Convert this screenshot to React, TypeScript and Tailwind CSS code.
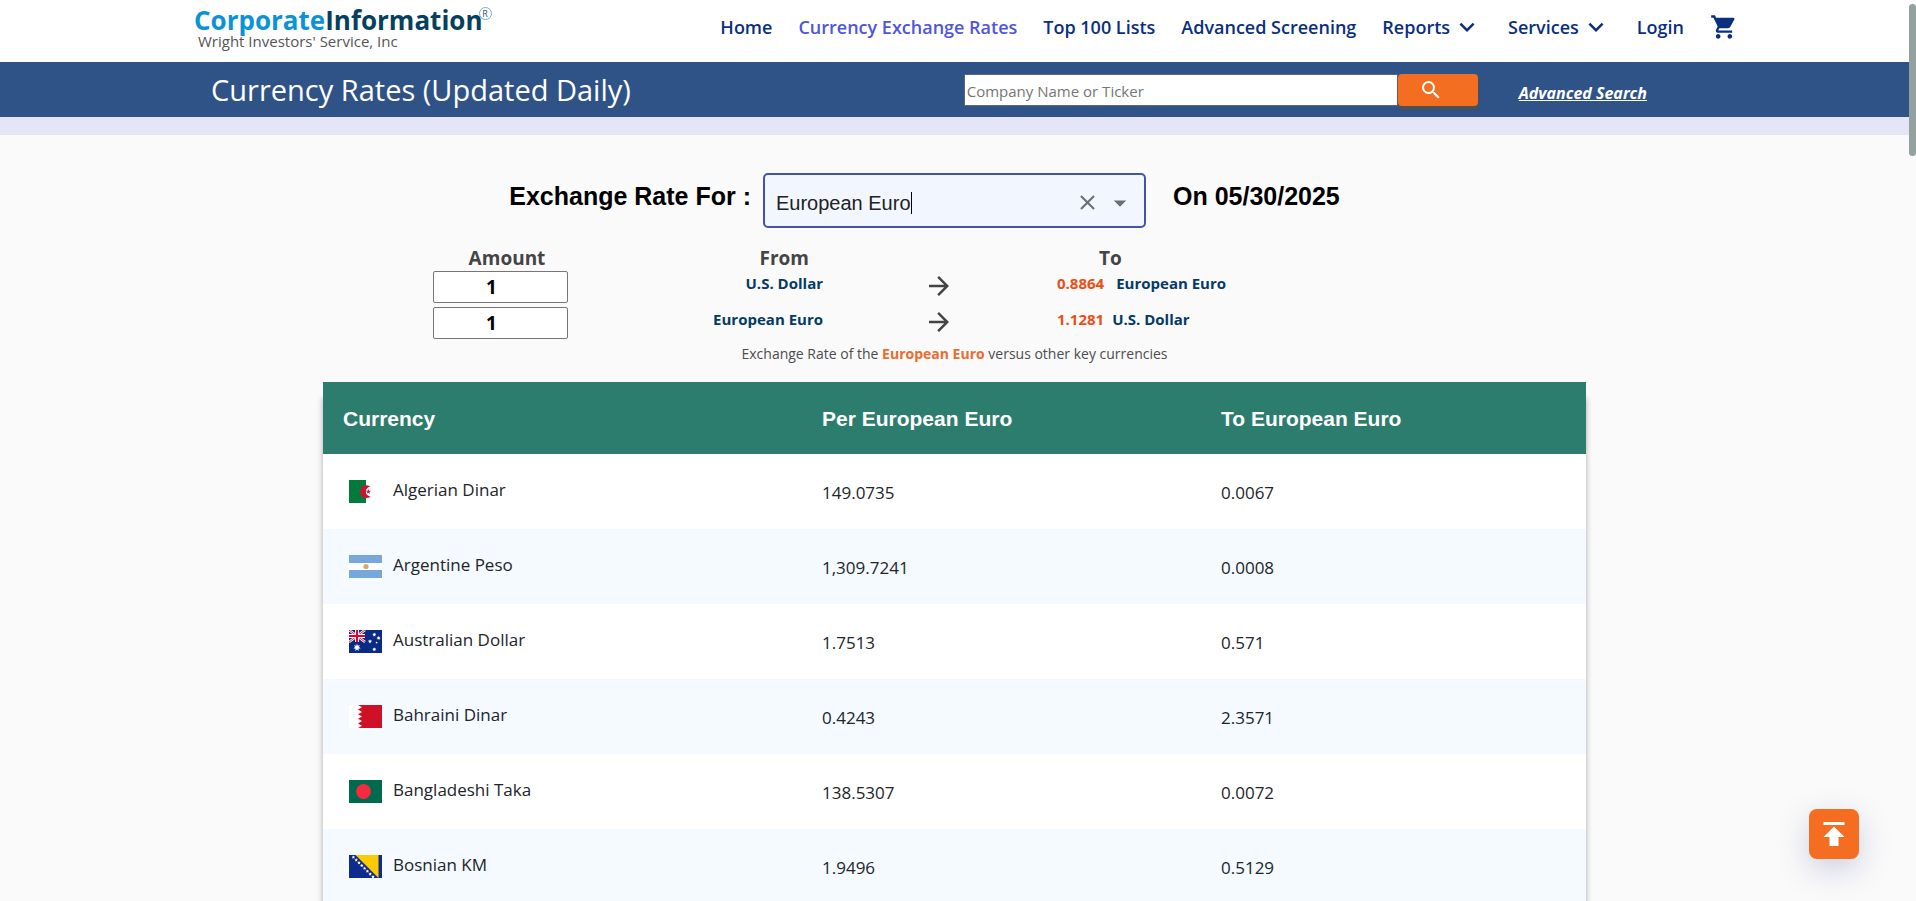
import type { ReactNode } from "react";
import {
  MdArrowDropDown,
  MdArrowForward,
  MdClose,
  MdExpandMore,
  MdPublish,
  MdSearch,
  MdShoppingCart,
} from "react-icons/md";

const navItems = [
  { label: "Home" },
  { label: "Currency Exchange Rates", active: true },
  { label: "Top 100 Lists" },
  { label: "Advanced Screening" },
];

const conversions = [
  { from: "U.S. Dollar", rate: "0.8864", to: "European Euro", toClass: "ml-3" },
  { from: "European Euro", rate: "1.1281", to: "U.S. Dollar", toClass: "ml-2" },
];

const star = (cx: number, cy: number, r: number, points: number, inner: number) => {
  const out: string[] = [];
  for (let i = 0; i < points * 2; i++) {
    const radius = i % 2 === 0 ? r : r * inner;
    const a = (Math.PI * i) / points - Math.PI / 2;
    out.push(`${cx + radius * Math.cos(a)},${cy + radius * Math.sin(a)}`);
  }
  return out.join(" ");
};

function Flag({ children }: { children: ReactNode }) {
  return (
    <svg viewBox="0 0 33 23" className="h-[23px] w-[33px] shrink-0" aria-hidden="true">
      {children}
    </svg>
  );
}

const flags: Record<string, ReactNode> = {
  dz: (
    <Flag>
      <rect width="33" height="23" fill="#fff" />
      <rect width="17" height="23" fill="#037a3c" />
      <path d="M21.6 6.7a6.4 6.4 0 1 0 0 9.8a4.9 4.9 0 1 1 0-9.8z" fill="#d21034" />
      <polygon points={star(19.4, 11.6, 2.7, 5, 0.42)} fill="#d21034" />
    </Flag>
  ),
  ar: (
    <Flag>
      <rect width="33" height="23" fill="#fff" />
      <rect width="33" height="8" fill="#78a8db" />
      <rect y="15" width="33" height="8" fill="#78a8db" />
      <circle cx="17" cy="11.5" r="2.6" fill="#d9a866" />
    </Flag>
  ),
  au: (
    <Flag>
      <rect width="33" height="23" fill="#0b2a86" />
      <path d="M0 0l16 12M16 0L0 12" stroke="#fff" strokeWidth="2.4" />
      <path d="M0 0l16 12M16 0L0 12" stroke="#e4002b" strokeWidth="0.9" />
      <path d="M8 0v12M0 6h16" stroke="#fff" strokeWidth="3.8" />
      <path d="M8 0v12M0 6h16" stroke="#e4002b" strokeWidth="2" />
      <polygon points={star(8, 17.5, 3.8, 7, 0.5)} fill="#fff" />
      <polygon points={star(25.3, 4.6, 2.1, 7, 0.5)} fill="#fff" />
      <polygon points={star(29.6, 8, 2.1, 7, 0.5)} fill="#fff" />
      <polygon points={star(21, 11.4, 2.1, 7, 0.5)} fill="#fff" />
      <polygon points={star(27.6, 12.6, 1.2, 5, 0.5)} fill="#fff" />
      <polygon points={star(25.3, 19.4, 2.1, 7, 0.5)} fill="#fff" />
    </Flag>
  ),
  bh: (
    <Flag>
      <rect width="33" height="23" fill="#fff" />
      <path
        d="M33 0H9l4 2.3-4 2.3 4 2.3-4 2.3 4 2.3-4 2.3 4 2.3-4 2.3 4 2.3-4 2.3H33z"
        fill="#ce1126"
      />
    </Flag>
  ),
  bd: (
    <Flag>
      <rect width="33" height="23" fill="#006a4e" />
      <circle cx="14.5" cy="11.5" r="7.4" fill="#f42a41" />
    </Flag>
  ),
  ba: (
    <Flag>
      <rect width="33" height="23" fill="#0f2b8c" />
      <path d="M6.5 0H29.5V23z" fill="#fecb00" />
      {[0, 1, 2, 3, 4, 5, 6, 7].map((i) => (
        <polygon key={i} points={star(4.4 + i * 2.8, 2.2 + i * 2.8, 1.8, 5, 0.5)} fill="#fff" />
      ))}
    </Flag>
  ),
};

const rates = [
  { flag: "dz", name: "Algerian Dinar", per: "149.0735", to: "0.0067" },
  { flag: "ar", name: "Argentine Peso", per: "1,309.7241", to: "0.0008" },
  { flag: "au", name: "Australian Dollar", per: "1.7513", to: "0.571" },
  { flag: "bh", name: "Bahraini Dinar", per: "0.4243", to: "2.3571" },
  { flag: "bd", name: "Bangladeshi Taka", per: "138.5307", to: "0.0072" },
  { flag: "ba", name: "Bosnian KM", per: "1.9496", to: "0.5129" },
];

function Header() {
  return (
    <header className="flex h-[62px] shrink-0 items-start justify-between bg-white pr-[171px] pl-[194px]">
      <a href="#home" className="flex flex-col pt-[7px]">
        <span className="flex items-start text-[26px] leading-[26px] font-bold">
          <span className="text-[#0c93d6]">Corporate</span>
          <span className="text-[#05405f]">Information</span>
          <span className="-ml-1 flex size-[13px] items-center justify-center rounded-full border border-[#7fa9bf] text-[9px] leading-none font-normal text-[#35566b]">
            R
          </span>
        </span>
        <span className="pl-1 text-[15px] leading-[16px] text-[#555]">
          Wright Investors' Service, Inc
        </span>
      </a>
      <nav className="flex h-[54px] items-center gap-[26px] text-[18px] font-semibold text-[#0a2f7f]">
        {navItems.map((item) => (
          <a key={item.label} href="#nav" className={item.active ? "text-[#4f55dc]" : ""}>
            {item.label}
          </a>
        ))}
        <button className="flex items-center gap-[2px]">
          Reports <MdExpandMore size={30} />
        </button>
        <button className="flex items-center gap-[2px]">
          Services <MdExpandMore size={30} />
        </button>
        <a href="#login">Login</a>
        <a href="#cart" aria-label="Cart">
          <MdShoppingCart size={28} />
        </a>
      </nav>
    </header>
  );
}

function TitleBar() {
  return (
    <div className="flex h-[55px] shrink-0 items-center bg-[#2f5387] pr-[262px] pl-[211px] text-white">
      <h1 className="text-[29px]">Currency Rates (Updated Daily)</h1>
      <form className="ml-auto flex items-center">
        <input
          aria-label="Company Name or Ticker"
          placeholder="Company Name or Ticker"
          className="h-[32px] w-[434px] border border-[#5c6675] bg-white px-[2px] pt-[2px] text-[15px] text-black placeholder:text-[#757575]"
        />
        <button
          type="button"
          aria-label="Search"
          className="flex h-[32px] w-[80px] items-center justify-center rounded-[4px] bg-[#f36e21] pr-[14px] shadow-[0_3px_2px_rgba(90,80,70,0.9)]"
        >
          <MdSearch size={24} />
        </button>
      </form>
      <a href="#advanced" className="mt-[6px] ml-[41px] text-[16px] font-bold italic underline">
        Advanced Search
      </a>
    </div>
  );
}

function CurrencyPicker() {
  return (
    <div className="flex items-start justify-center pr-[60px] font-['Liberation_Sans',Arial,sans-serif]">
      <label htmlFor="currency" className="mt-[7px] text-[25px] leading-[32px] font-bold text-black">
        Exchange Rate For :
      </label>
      <div className="ml-3 flex h-[55px] w-[383px] items-center rounded-[5px] border-2 border-[#4553a6] bg-[#f1f6ff] pt-1 pr-[9px] pl-[11px]">
        <input
          id="currency"
          defaultValue="European Euro"
          className="[field-sizing:content] bg-transparent text-[20px] text-[#222] outline-none"
        />
        <span className="h-[22px] w-px bg-black" />
        <button aria-label="Clear" className="ml-auto text-[#6b6f75]">
          <MdClose size={25} />
        </button>
        <button aria-label="Open" className="ml-[5px] text-[#6b6f75]">
          <MdArrowDropDown size={30} />
        </button>
      </div>
      <p className="mt-[7px] ml-[27px] text-[25px] leading-[32px] font-bold text-black">
        On 05/30/2025
      </p>
    </div>
  );
}

function Converter() {
  return (
    <table className="mx-auto mt-[19px] w-[1043px] table-fixed border-collapse text-[15px] font-bold text-[#053a66]">
      <thead>
        <tr className="h-[22px] text-[19px] leading-[22px] text-[#444]">
          <th className="w-[135px] pl-[13px] text-center">Amount</th>
          <th className="w-[255px] pr-[14px] text-right">From</th>
          <th className="w-[232px]" />
          <th className="pl-[44px] text-left">To</th>
        </tr>
      </thead>
      <tbody>
        {conversions.map((c) => (
          <tr key={c.from} className="h-[36px] leading-[20px]">
            <td className="p-0">
              <input
                aria-label={`Amount in ${c.from}`}
                defaultValue="1"
                className="block h-[32px] w-full rounded-[2px] border border-[#767676] bg-white pr-[18px] text-center text-[19px] text-black"
              />
            </td>
            <td className="p-0 pb-2 text-right">{c.from}</td>
            <td className="p-0 pb-[2px]">
              <MdArrowForward size={30} className="mx-auto text-[#444]" />
            </td>
            <td className="p-0 pb-2 pl-[2px]">
              <span className="text-[#ea4f15]">{c.rate}</span>
              <span className={c.toClass}>{c.to}</span>
            </td>
          </tr>
        ))}
      </tbody>
    </table>
  );
}

function RatesTable() {
  return (
    <table className="mx-auto mt-[17px] w-[1263px] table-fixed border-collapse text-left shadow-[0_16px_6px_rgba(0,0,0,0.32)]">
      <thead className="bg-[#2c7d6d] font-['Liberation_Sans',Arial,sans-serif] text-[21px] text-white">
        <tr className="h-[72px]">
          <th className="w-[499px] pt-[2px] pl-5">Currency</th>
          <th className="w-[399px] pt-[2px]">Per European Euro</th>
          <th className="pt-[2px]">To European Euro</th>
        </tr>
      </thead>
      <tbody className="text-[17px] text-[#212529]">
        {rates.map((r) => (
          <tr key={r.name} className="h-[75px] bg-white even:bg-[#f4faff]">
            <td className="pl-[26px]">
              <div className="flex items-center gap-[11px]">
                {flags[r.flag]}
                <span className="pb-1">{r.name}</span>
              </div>
            </td>
            <td className="pt-[2px]">{r.per}</td>
            <td className="pt-[2px]">{r.to}</td>
          </tr>
        ))}
      </tbody>
    </table>
  );
}

export default function App() {
  return (
    <div className="flex h-screen overflow-hidden bg-[#fafafa] font-['Open_Sans','Noto_Sans',sans-serif]">
      <div className="flex min-w-0 flex-1 flex-col">
        <Header />
        <TitleBar />
        <div className="h-[18px] shrink-0 bg-[#e4e5f7]" />
        <main className="min-h-0 flex-1 overflow-hidden pt-[38px]">
          <CurrencyPicker />
          <Converter />
          <p className="mt-[2px] text-center text-[14px] leading-[22px] text-[#4c4c4c]">
            Exchange Rate of the <strong className="text-[#ec6b2d]">European Euro</strong> versus
            other key currencies
          </p>
          <RatesTable />
        </main>
      </div>
      <div className="w-[7px] shrink-0 pt-1">
        <div className="h-[152px] rounded-full bg-[#95a19f]" />
      </div>
      <button
        aria-label="Back to top"
        className="fixed right-[57px] bottom-[42px] flex size-[50px] items-center justify-center rounded-[8px] bg-[#f56d20] text-white shadow-[0_10px_30px_rgba(80,80,160,0.25)]"
      >
        <MdPublish size={36} />
      </button>
    </div>
  );
}
